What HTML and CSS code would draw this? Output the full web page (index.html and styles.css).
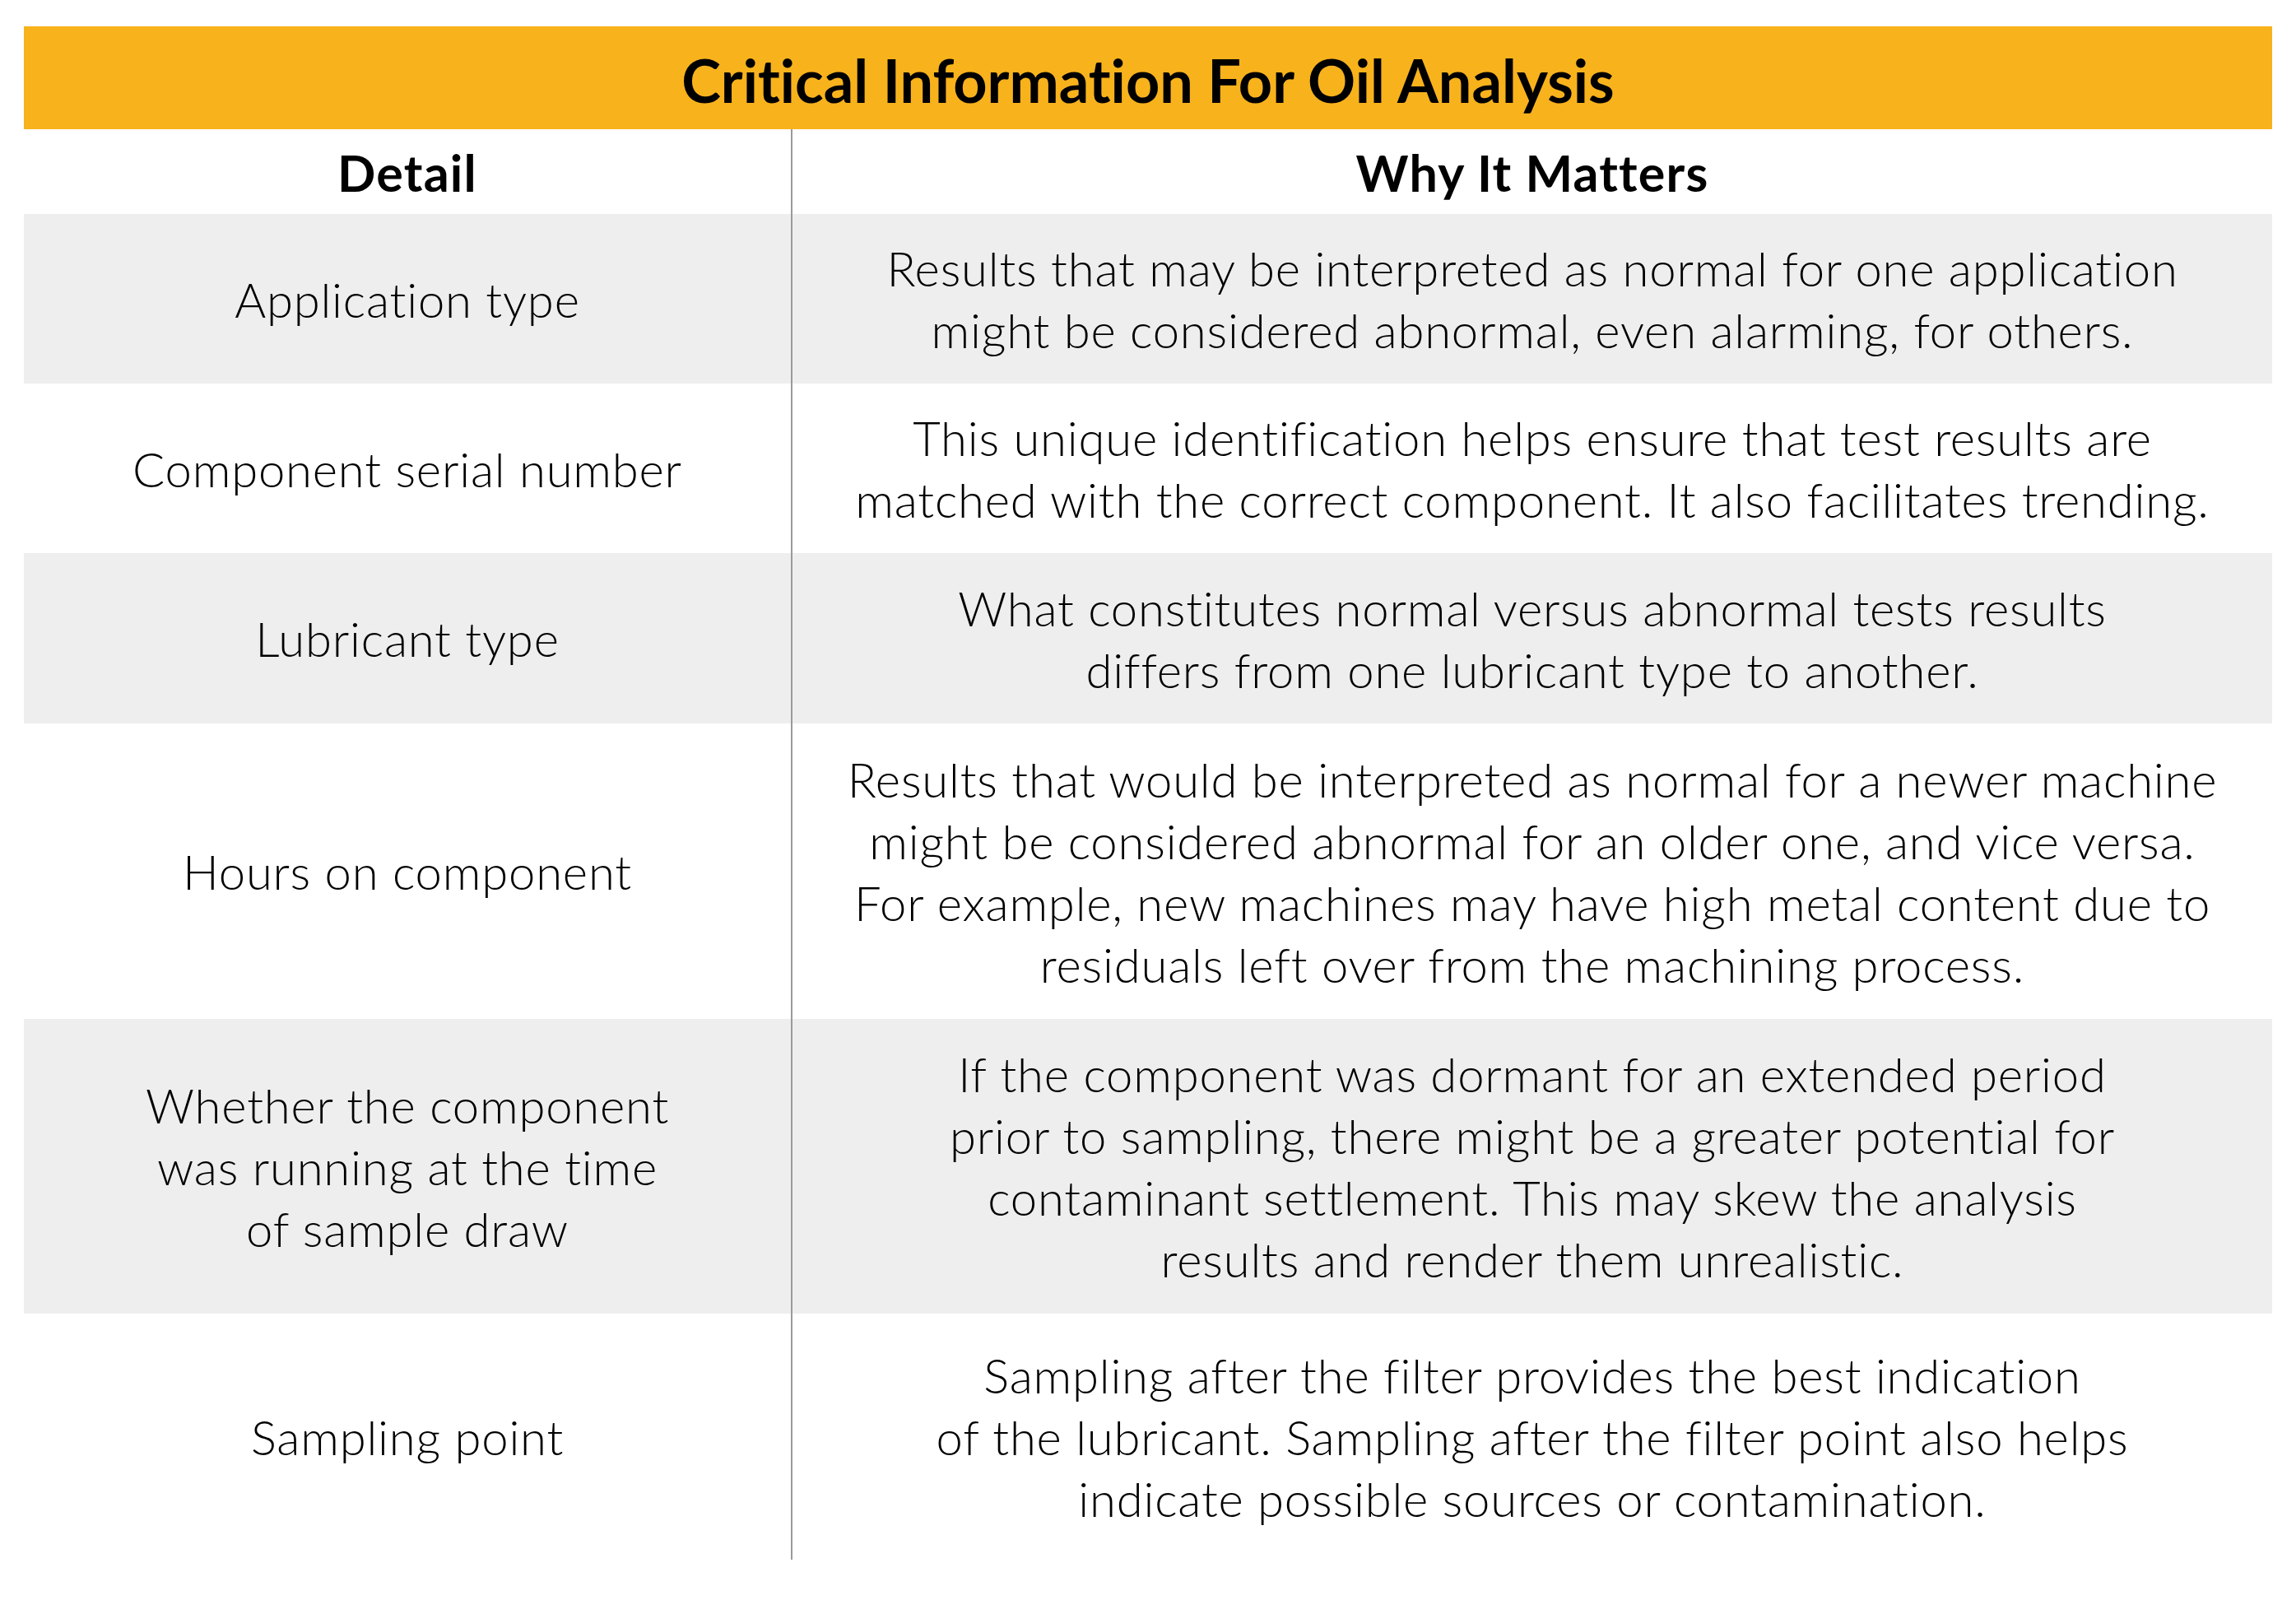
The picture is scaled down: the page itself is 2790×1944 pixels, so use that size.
FILE: index.html
```html
<!DOCTYPE html>
<html lang="en">
<head>
<meta charset="utf-8">
<title>Critical Information For Oil Analysis</title>
<link rel="stylesheet" href="styles.css">
</head>
<body>
<div class="table">
  <div class="title">Critical Information For Oil Analysis</div>
  <div class="head c1">Detail</div>
  <div class="head c2">Why It Matters</div>

  <div class="cell c1 shade">Application type</div>
  <div class="cell c2 shade">Results that may be interpreted as normal for one application<br>might be considered abnormal, even alarming, for others.</div>

  <div class="cell c1">Component serial number</div>
  <div class="cell c2">This unique identification helps ensure that test results are<br>matched with the correct component. It also facilitates trending.</div>

  <div class="cell c1 shade">Lubricant type</div>
  <div class="cell c2 shade">What constitutes normal versus abnormal tests results<br>differs from one lubricant type to another.</div>

  <div class="cell c1">Hours on component</div>
  <div class="cell c2">Results that would be interpreted as normal for a newer machine<br>might be considered abnormal for an older one, and vice versa.<br>For example, new machines may have high metal content due to<br>residuals left over from the machining process.</div>

  <div class="cell c1 shade">Whether the component<br>was running at the time<br>of sample draw</div>
  <div class="cell c2 shade">If the component was dormant for an extended period<br>prior to sampling, there might be a greater potential for<br>contaminant settlement. This may skew the analysis<br>results and render them unrealistic.</div>

  <div class="cell c1">Sampling point</div>
  <div class="cell c2">Sampling after the filter provides the best indication<br>of the lubricant. Sampling after the filter point also helps<br>indicate possible sources or contamination.</div>
</div>
</body>
</html>
```

FILE: styles.css
```css
html, body {
  margin: 0;
  padding: 0;
  background: #ffffff;
}
body {
  font-family: Lato, "Liberation Sans", sans-serif;
  color: #000000;
  font-variant-ligatures: none;
  font-feature-settings: "liga" 0, "dlig" 0;
}
.table {
  margin: 32px 29px 0 29px;
  width: 2732px;
  display: grid;
  grid-template-columns: 932px 1800px;
  grid-template-rows: 125px 103px 206px 206px 207px 359px 358px 299px;
}
.title {
  grid-column: 1 / 3;
  background: #f8b21c;
  display: flex;
  align-items: center;
  justify-content: center;
  font-size: 72px;
  font-weight: 700;
  letter-spacing: 0;
  padding-top: 4px;
  box-sizing: border-box;
}
.head {
  display: flex;
  align-items: center;
  justify-content: center;
  font-size: 61px;
  font-weight: 700;
  letter-spacing: 1.2px;
  padding-top: 2px;
  box-sizing: border-box;
}
.cell {
  display: flex;
  align-items: center;
  justify-content: center;
  text-align: center;
  font-size: 58px;
  line-height: 75px;
  font-weight: 300;
  letter-spacing: 0.8px;
  white-space: nowrap;
}
.c2 {
  border-left: 2px solid #9a9a9a;
}
.shade {
  background: #eeeeee;
}
```
